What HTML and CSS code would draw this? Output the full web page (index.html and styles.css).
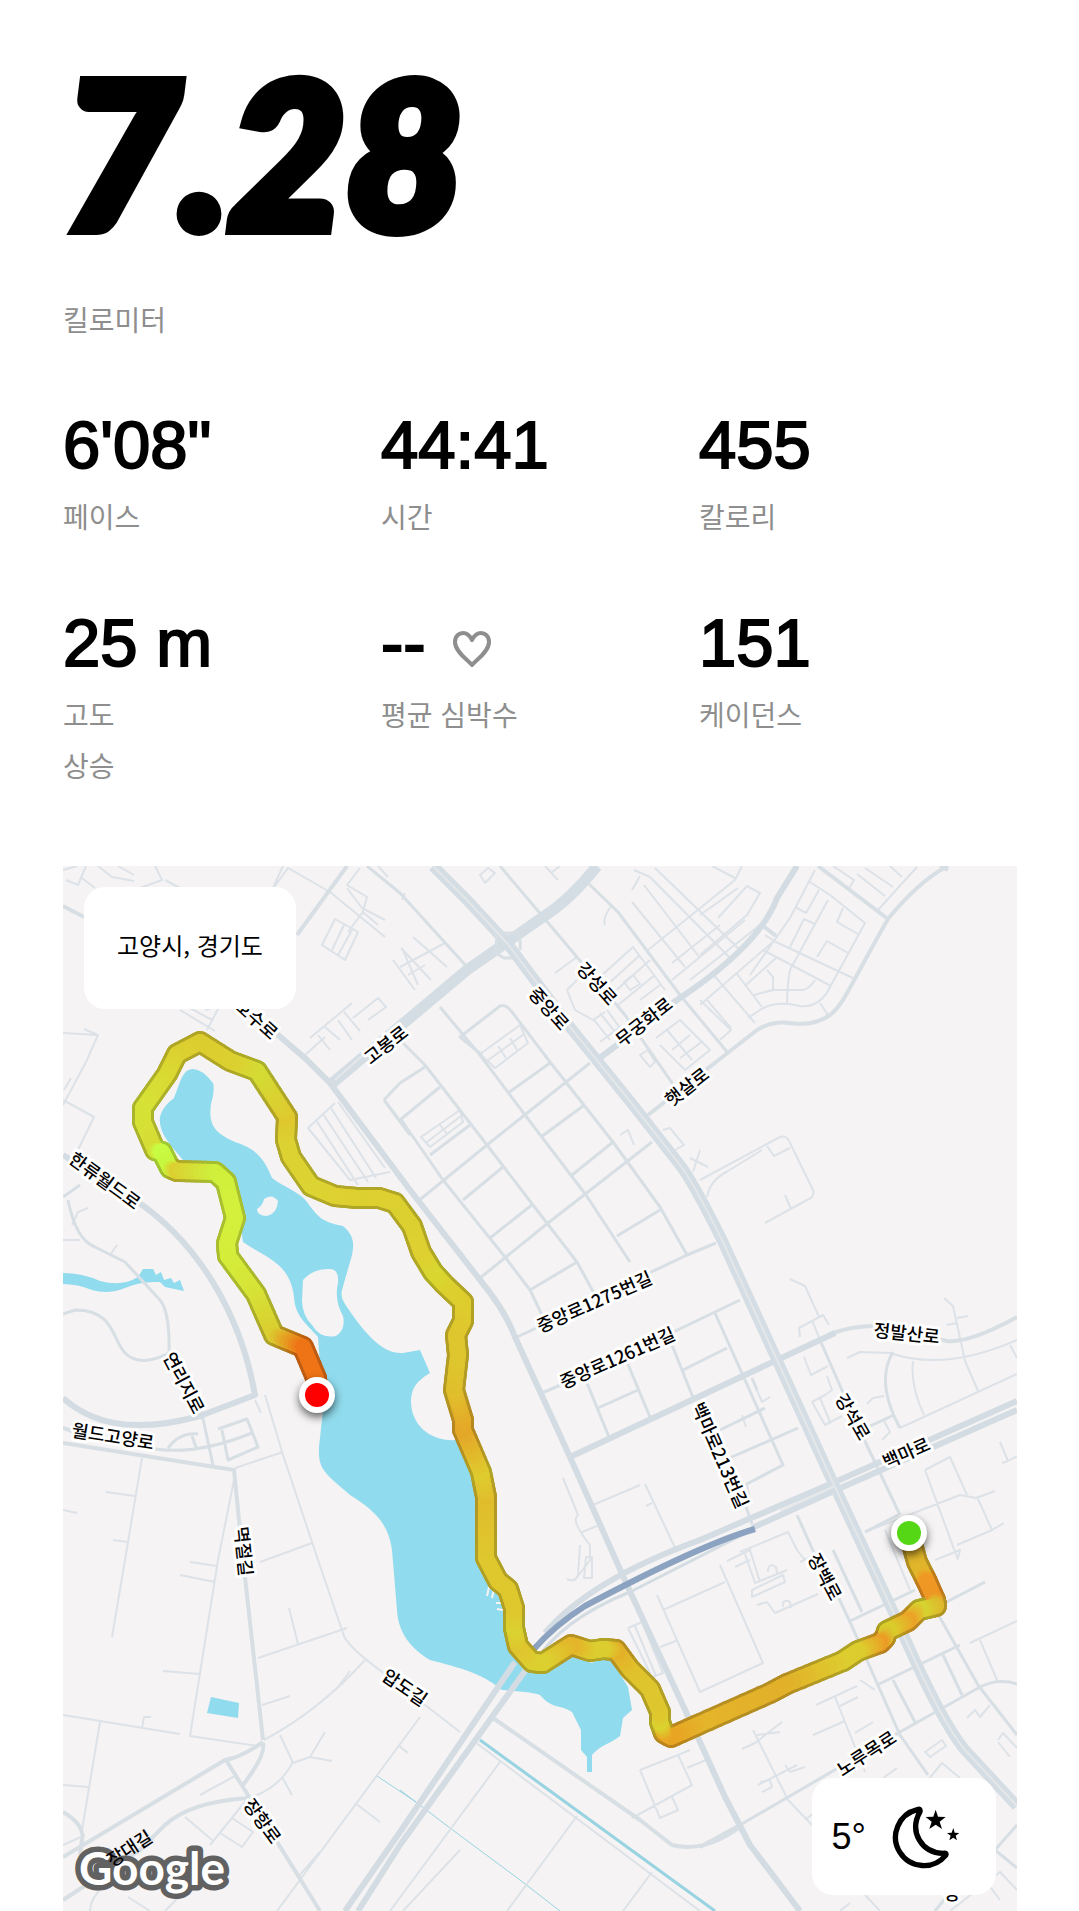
FILE: index.html
```html
<!DOCTYPE html>
<html lang="ko">
<head>
  <meta charset="UTF-8">
  <meta name="viewport" content="width=device-width, initial-scale=1.0">
  <title>러닝 기록</title>
  <link rel="stylesheet" href="styles.css">
</head>
<body>
  <main class="run">
    <header class="distance">
      <h1>7.28</h1>
      <p class="label">킬로미터</p>
    </header>

    <section class="stats">
      <div class="stat">
        <p class="value">6'08"</p>
        <p class="label">페이스</p>
      </div>
      <div class="stat">
        <p class="value">44:41</p>
        <p class="label">시간</p>
      </div>
      <div class="stat">
        <p class="value">455</p>
        <p class="label">칼로리</p>
      </div>
      <div class="stat">
        <p class="value">25 m</p>
        <p class="label">고도<br>상승</p>
      </div>
      <div class="stat">
        <p class="value">--
          <svg class="heart" viewBox="0 0 40 38" aria-hidden="true">
            <path d="M20 35 C16 30 3 22 3 12 C3 6 7 3 11 3 C16 3 18 6 20 10 C22 6 24 3 29 3 C33 3 37 6 37 12 C37 22 24 30 20 35 Z"/>
          </svg>
        </p>
        <p class="label">평균 심박수</p>
      </div>
      <div class="stat">
        <p class="value">151</p>
        <p class="label">케이던스</p>
      </div>
    </section>

    <section class="map">
      <svg class="map-canvas" viewBox="63 866 954 1045" role="img" aria-label="러닝 경로 지도">
        <!-- water -->
        <g class="water">
          <path d="M193 1069 Q202 1069 213 1083 Q215 1090 211 1104 C208 1125 215 1133 235 1142 C255 1148 264 1158 272 1178 C285 1188 300 1192 307 1202 C318 1217 322 1222 343 1226 C355 1236 355 1246 350 1262 L342 1290 Q340 1297 345 1304 C362 1330 382 1355 403 1353 L420 1350 L430 1373 C415 1382 411 1390 411 1403 C412 1425 430 1442 457 1440 L483 1500 L485 1557 L497 1583 L515 1645 L530 1662 L573 1656 L592 1663 L608 1655 L628 1687 L632 1710 L623 1718 L620 1736 C610 1744 600 1745 592 1755 L592 1772 L587 1772 L587 1757 L581 1750 L581 1730 L572 1712 C560 1704 553 1710 540 1695 Q534 1692 502 1690 C480 1672 460 1668 430 1660 C405 1645 398 1627 397 1610 L392 1550 C388 1520 370 1508 350 1495 C325 1473 318 1470 319 1447 L323 1410 L318 1337 C308 1325 295 1317 294 1297 C290 1262 265 1258 243 1242 L238 1210 L230 1180 L183 1160 C170 1145 158 1132 160 1117 Q162 1107 174 1098 C180 1084 182 1069 193 1069 Z"/>
          <path d="M63 1273 Q82 1273 100 1281 Q122 1287 138 1277 L143 1269 L153 1269 L156 1275 L161 1272 L164 1280 L171 1278 L174 1283 L180 1280 L184 1291 L165 1287 L160 1282 Q140 1281 125 1288 Q108 1295 92 1290 Q78 1284 63 1284 Z"/>
          <path d="M211 1697 L239 1703 L238 1718 L207 1713 Z"/>
        </g>
        <g class="land">
          <path d="M303 1280 Q314 1268 330 1269 Q339 1269 338 1283 Q334 1300 343 1316 Q346 1330 336 1336 Q320 1339 312 1325 Q302 1315 302 1300 Z"/>
          <path d="M257 1209 Q263 1205 264 1199 Q272 1193 278 1201 Q277 1214 267 1216 Q257 1216 257 1209 Z"/>
        </g>
        <g class="pier">
          <path d="M489 1587 L487 1596 M494 1589 L492 1598 M496 1603 L503 1603 M497 1609 L503 1610"/>
        </g>
        <path class="canal" d="M480 1740 L590 1820 L715 1911"/>
        <path class="canal thin" d="M377 1776 L416 1802 M400 1790 L450 1828 L520 1880 L560 1911"/>

        <!-- narrow streets -->
        <g class="street">
          <path d="M63 870 L77 866 M66 880 L78 885 L86 866 M82 878 L95 888 M98 866 L112 877 L134 881 M118 866 L134 875 M155 866 L162 880 L140 888 M165 880 L180 888"/>
          <path d="M283 866 L272 890 L288 868 L330 892 L385 937 M360 868 L347 885 L367 897 L362 915 M347 888 L362 908 L385 920 M362 913 L348 932 M363 912 L378 925 M335 919 L358 932 L345 960 L322 945 Z M344 925 L332 950 M352 930 L338 955 M378 866 L388 877 M402 900 L405 893"/>
          <path d="M402 948 L418 985 M400 967 L445 943 M413 937 L447 967 M401 948 L431 980 M393 960 L415 990 M408 975 L425 965"/>
          <path d="M310 1038 L352 1003 M318 1035 L330 1050 M325 1027 L340 1040 M338 1020 L352 1040 M344 1012 L360 1031 M305 1055 L325 1037 M353 1018 L378 998 L386 1007 L368 1020"/>
          <path d="M335 1103 L308 1128 L350 1180 L390 1172 M316 1120 L358 1185 M323 1114 L368 1182 M331 1108 L376 1178 M338 1102 L385 1168"/>
          <path d="M63 1033 L98 1035 L86 1062 L63 1105 M63 1100 L94 1117 L78 1150 M71 1078 L64 1090 M84 1029 L98 1035 M180 1010 L215 1031 M190 1008 L212 1020 M205 1010 L220 1005 L207 1030"/>
          <path d="M480 1054 L520 1025 L528 1043 L495 1068 Z M487 1061 L524 1034 M498 1046 L506 1058 M510 1038 L517 1050 M421 1137 L460 1110 L463 1122 L430 1147 Z M427 1142 L461 1116 M440 1125 L448 1135"/>
          <path d="M602 975 L633 947 L665 990 M607 985 L640 955 M612 994 L650 960 M640 1000 L660 985 M618 1005 L655 975 M624 982 L633 975 L640 984 L630 990 Z M567 990 L577 980 M567 990 L575 1010 L593 1020 L605 1012 M594 1020 L610 1040 M600 1013 L620 1038 M607 1010 L623 1032 M600 1042 L620 1027 M555 973 L577 957"/>
          <path d="M656 1038 L680 1020 L710 1050 L685 1070 L660 1045 M667 1030 L692 1060 M672 1050 L690 1035 M680 1058 L703 1041 M640 1055 L648 1050 L655 1062 L650 1067 Z M663 1130 L670 1128 L684 1145 L675 1150 M620 1135 L628 1130 L634 1145 M480 875 L488 868 L495 873 L485 883 Z M545 866 L558 880 M552 872 L560 866"/>
          <path d="M605 925 Q602 918 612 905 M634 870 L650 877 L732 960 M655 868 L740 950 M644 885 L700 958 M632 902 L685 967 M640 876 L632 890 M690 980 L760 925 M672 980 L745 920 M648 950 L735 880 L742 866 M672 963 L720 925 M700 915 L738 888 M712 866 L735 878"/>
          <path d="M718 918 L747 886 L760 893 L747 915 L700 955 M750 975 L790 918 L815 870 M810 882 L830 895 L865 923 L830 987 Q820 1008 800 1006 Q775 1000 760 1010 L748 1018 M795 907 L806 913 L819 890 M828 900 L790 970 Q787 985 787 1004 M790 947 L804 919 L815 924 M843 908 L837 922 L858 934 M838 920 L842 910 M817 957 L827 941 L848 953 M765 935 L776 942 L855 979 M763 950 L831 986 M773 990 L803 990 Q810 988 815 980 M737 974 L762 1007 M755 1023 L712 973 M754 995 L773 990 L773 977 L767 970 M746 985 L777 957 M700 1005 L775 940 M820 1003 L828 1015 M833 866 L854 880 L848 890 M857 874 L885 896 M865 868 L893 887 M890 866 L902 877 M877 911 L917 867"/>
          <path d="M700 1000 L731 1030 L720 1040 M707 1000 L731 1028 M700 1180 L780 1137 Q787 1135 790 1143 L813 1190 Q815 1197 807 1200 L765 1223 M707 1197 Q710 1180 728 1171 L762 1150 M767 1146 L774 1156 L790 1148 M785 1195 L791 1209 M690 1158 L708 1167 M700 1150 L693 1172"/>
          <path d="M63 1240 L80 1240 M110 1255 L117 1245 M72 1225 L78 1212 L88 1208 M142 1458 L125 1560 L112 1637 M106 1492 L135 1496 M113 1540 L128 1542 M63 1510 L77 1513 M234 1480 L218 1560 L190 1736 L258 1746 M180 1575 L215 1582 M190 1562 L217 1566 M163 1671 L200 1674"/>
          <path d="M255 1400 L261 1413 M265 1395 L283 1455 L318 1560 L343 1633 Q345 1645 385 1674 L460 1732 M235 1468 L283 1452 M260 1562 L312 1543 M258 1658 L347 1628 M289 1608 L298 1644 M262 1705 L290 1696 M63 1715 L180 1734 M142 1728 L144 1717 L151 1717 M100 1722 L82 1830 M63 1785 L88 1787"/>
          <path d="M264 1740 Q320 1710 365 1660 M338 1687 L350 1671 M280 1735 L293 1763 L310 1757 L332 1761 M310 1757 L325 1732 M248 1798 Q278 1790 293 1762 M200 1795 L235 1776 M185 1817 L212 1840 M210 1845 L248 1798 M220 1833 L242 1847 L253 1832 L232 1818 M282 1777 L292 1795 M420 1717 L277 1911 M298 1877 L320 1852 M355 1803 L380 1822 M398 1745 L408 1753 M390 1911 L500 1762 M507 1911 L577 1816 M623 1911 L652 1872 M475 1742 L700 1911 M128 1897 L150 1911 M165 1911 L210 1865 M63 1845 L85 1835 M90 1911 Q90 1898 105 1885 M403 1911 L460 1850"/>
          <path d="M563 1478 L578 1515 Q570 1520 590 1545 L590 1560 L575 1580 M582 1532 L597 1526 M580 1545 L578 1575 Q575 1583 567 1579 M586 1557 L592 1557 L592 1578 L584 1578 Z M593 1505 L640 1485 M645 1484 L677 1552 M646 1506 L652 1503"/>
          <path d="M720 1565 L763 1663 L700 1692 L657 1595 M663 1610 L725 1582 M660 1647 L676 1641 M628 1628 L642 1622 L663 1673 L652 1677 L628 1628 M635 1626 L656 1676 M640 1770 L678 1755 L692 1785 L643 1812 L632 1818 M640 1770 L660 1818 L678 1810 L672 1797 M687 1768 L706 1760 M678 1755 L690 1750"/>
          <path d="M727 1561 L750 1550 L760 1582 M745 1554 L755 1583 L787 1570 M752 1590 L783 1575 L785 1582 L752 1597 Z M757 1605 L767 1602 L775 1613 L818 1594 M768 1572 Q768 1562 776 1567 L777 1573 M783 1607 Q782 1598 790 1602 L791 1608 M800 1562 L815 1555 M735 1567 L750 1560"/>
          <path d="M816 1705 L857 1686 M835 1697 L865 1772 M840 1706 L858 1697 M813 1735 L845 1721 M855 1733 L873 1722 M742 1749 L755 1743 L782 1722 M753 1730 L788 1800 L812 1825 M757 1735 L780 1732 M758 1785 L797 1765 M760 1782 L770 1780 L772 1787 L762 1792 M785 1765 L790 1772 L805 1767 M805 1820 L815 1812 M883 1778 L897 1768"/>
          <path d="M925 1752 L942 1740 L946 1746 L930 1757 Z M928 1780 L942 1763 L960 1778 M967 1718 L975 1710 L980 1717 L990 1705 M998 1740 L1003 1733 L1017 1748 M998 1742 L1010 1757 M970 1643 L1017 1621 M980 1640 L997 1680 M875 1690 L860 1680 M885 1530 L910 1590 M935 1560 L960 1550 L958 1558 M925 1470 L950 1457 L967 1495 M925 1470 L958 1560 M865 1532 L960 1495 L976 1498 L995 1491 M978 1499 L992 1530 L957 1545 M992 1530 L1004 1523 M1000 1442 L1008 1461 L1017 1456 M1002 1463 L1008 1461"/>
          <path d="M790 1279 L805 1286 L819 1317 M800 1337 L799 1328 L823 1315 L829 1325 M812 1320 L820 1340 M804 1357 L811 1375 L828 1366 M812 1402 L825 1395 L832 1390 L827 1376 M812 1402 L825 1425 L842 1416 M820 1398 L830 1422 M847 1358 L860 1352 L890 1353 Q945 1372 1017 1340 M913 1361 Q910 1385 924 1415 M944 1298 L953 1306 L965 1361 L978 1391 M957 1318 L968 1316 M947 1325 L957 1323 M900 1428 L1017 1374 M1010 1345 L1017 1358 M867 1404 L873 1398 L884 1396 M884 1421 L890 1432 L882 1440 M756 1388 L762 1402 L770 1397 M742 1415 L746 1427"/>
          <path d="M747 1485 L750 1500 M805 1560 L797 1550 L788 1532 L740 1552 M840 1911 L850 1903 M865 1895 L880 1911 M950 1911 L1000 1872 L1017 1890 M985 1880 L1000 1900"/>
        </g>

        <!-- local roads -->
        <g class="local">
          <path d="M367 866 L400 893 L468 968 M440 1007 L480 1055 L525 1115 L586 1195 L630 1262 M400 1040 L425 1065 L487 1145 L533 1205 L577 1262 L595 1295 M400 1118 L443 1180 L505 1257 L530 1290 L542 1315 M482 1055 L460 1037 L500 1006 Q506 1004 512 1012 L550 1062 L613 1142 L660 1207 L687 1255"/>
          <path d="M500 866 L577 957 L625 1015 L677 1090 M589 884 L618 912 L680 995 L728 1053 M400 1083 L425 1067 M384 1100 L400 1083 M384 1100 L410 1135 M400 1120 L440 1087 M398 1118 L384 1100 M508 1093 L550 1063 M417 1202 L487 1145 L590 1063 M430 1155 L470 1125 M541 1137 L583 1106 M463 1200 L503 1167 M572 1175 L613 1142 M480 1278 L548 1223 L652 1142 M490 1238 L533 1204 M530 1290 L577 1262 M617 1236 L660 1210"/>
          <path d="M517 1337 L545 1324 M645 1275 L687 1255 L716 1243 M542 1393 L565 1383 M665 1336 L740 1300 M585 1378 L609 1437 M627 1362 L650 1417 M598 1408 L638 1390 M672 1345 L694 1400 M740 1490 L752 1524 M683 1370 L727 1348 M715 1313 L783 1465 L745 1485 M720 1430 L765 1408 M725 1460 L798 1428 M752 1378 L757 1390"/>
          <path d="M797 1515 L815 1555 M835 1590 L850 1622 L900 1735 L928 1775 M833 1550 L862 1612 M848 1622 L915 1590 M865 1532 L898 1515 M820 1340 L845 1397 M862 1435 L900 1515 M935 1608 L985 1582 M930 1600 L978 1685 L1017 1735 M877 1685 L960 1645 M740 1825 L900 1732 L980 1687 Q998 1678 1017 1684 M893 1680 L915 1722 M943 1655 L962 1695 M893 1352 Q875 1382 900 1428 M868 1427 L894 1415 M995 1850 L1017 1825 M995 1850 L1017 1868 M935 1911 L960 1880"/>
          <path d="M68 1200 Q76 1240 95 1247 L125 1262 L160 1300 Q170 1312 169 1353 Q140 1368 125 1353 C112 1340 115 1310 75 1310 L63 1314 M63 1197 L80 1185 M200 1405 L213 1465 M168 1448 Q180 1432 198 1434 M192 1436 L197 1450 M145 1447 Q190 1458 252 1433 M218 1429 L247 1419 L258 1447 L228 1460 L222 1430"/>
        </g>

        <!-- main roads -->
        <g class="road">
          <path d="M63 1443 L234 1470 L242 1550 L263 1740 M263 1742 Q240 1758 225 1760 L63 1857 M226 1760 L248 1795 L320 1911 M263 1743 Q266 1755 243 1785 M248 1798 Q190 1802 165 1825 L140 1850 L63 1900 M63 1812 Q85 1825 82 1840 L80 1855 M63 1428 L90 1437 M347 866 L297 935 M63 906 L84 917"/>
          <path d="M648 1115 L757 1030 C785 1012 800 1035 830 1015 C845 1003 850 985 888 919 Q920 880 948 866 M818 866 L888 919 M762 925 L776 936 M940 866 L948 870"/>
          <path d="M493 1718 L640 1820 L672 1845 Q705 1853 740 1827 M700 1847 L740 1825"/>
          <path d="M833 1333 Q855 1325 880 1326 L947 1341 Q970 1343 1017 1317"/>
        </g>
        <g class="avenue">
          <path d="M63 1155 L135 1200 C195 1240 240 1310 255 1395 L200 1416 C130 1435 90 1422 63 1398"/>
          <path d="M255 1015 L307 1060 L330 1083 L410 1190 L480 1280 Q505 1310 515 1337 L570 1457 L627 1585 L700 1742 L725 1797 L750 1845 L800 1911"/>
          <path d="M570 1457 L777 1360 L835 1333"/>
          <path d="M597 1060 L677 1000 Q760 945 777 898 L797 866"/>
          <path d="M1017 1401 L835 1482 L700 1540 Q590 1580 545 1633"/>
          <path d="M1017 1410 L836 1490 L752 1528"/>
          <path d="M515 1662 L400 1832 L345 1911"/>
          <path d="M530 1664 L400 1845 L358 1911"/>
        </g>
        <path class="avenue faint" d="M752 1530 L630 1592 Q560 1620 533 1665"/>
        <g class="highway">
          <path d="M597 866 Q570 900 543 917 L467 970 L330 1085"/>
          <path d="M433 866 L467 900 L507 943 L570 1027 L633 1105 L680 1165 Q692 1180 722 1240 L777 1360 L835 1487 L897 1620 Q940 1720 965 1750 L1017 1806"/>
        </g>
        <path class="ramp" d="M496 933 L518 933 Q521 938 520 950 M496 933 Q498 945 494 952 L504 958 L514 958"/>
        <path class="median" d="M433 866 L467 900 L507 943 L570 1027 L633 1105 L680 1165 Q692 1180 722 1240 L777 1360 L835 1487 L897 1620 Q940 1720 965 1750 L1017 1806 M400 1022 L335 1080 M835 1486 L780 1511"/>
        <path class="tunnel" d="M755 1529 Q700 1545 585 1606 Q555 1625 533 1650"/>

        <text class="google" x="79" y="1885">Google</text>

        <!-- street names -->
        <g class="names">
          <text transform="translate(252 1024) rotate(42)">호수로</text>
          <text transform="translate(390 1050) rotate(-38)">고봉로</text>
          <text transform="translate(544 1013) rotate(48)">중앙로</text>
          <text transform="translate(592 988) rotate(48)">강성로</text>
          <text transform="translate(648 1027) rotate(-38)">무궁화로</text>
          <text transform="translate(691 1092) rotate(-38)">햇살로</text>
          <text transform="translate(101 1186) rotate(36)">한류월드로</text>
          <text transform="translate(597 1308) rotate(-24)">중앙로1275번길</text>
          <text transform="translate(620 1364) rotate(-24)">중앙로1261번길</text>
          <text transform="translate(906 1340) rotate(6)">정발산로</text>
          <text transform="translate(714 1458) rotate(66)">백마로213번길</text>
          <text transform="translate(847 1420) rotate(60)">강석로</text>
          <text transform="translate(909 1459) rotate(-24)">백마로</text>
          <text transform="translate(178 1386) rotate(62)">연리지로</text>
          <text transform="translate(112 1443) rotate(9)">월드고양로</text>
          <text transform="translate(237 1552) rotate(84)">멱절길</text>
          <text transform="translate(401 1693) rotate(34)">압도길</text>
          <text transform="translate(819 1580) rotate(62)">장백로</text>
          <text transform="translate(257 1825) rotate(54)">장항로</text>
          <text class="plain" transform="translate(133 1854) rotate(-33)">장대길</text>
          <text transform="translate(870 1759) rotate(-33)">노루목로</text>
          <text transform="translate(952 1900)">장</text>
        </g>

        <g id="route"></g>

        <!-- start and finish -->
        <g class="marker">
          <circle cx="909" cy="1533" r="18"/>
          <circle class="start" cx="909" cy="1533" r="12"/>
        </g>
        <g class="marker">
          <circle cx="317" cy="1395" r="18"/>
          <circle class="finish" cx="317" cy="1395" r="12"/>
        </g>
      </svg>

      <div class="place">고양시, 경기도</div>
      <div class="weather">
        <span>5°</span>
        <svg class="moon" viewBox="570 760 219 201" aria-hidden="true">
          <path class="crescent" d="M652 780 A85 85 0 1 0 737 917 Q741 908 729 911 C665 909 626 847 660 786 Q662 776 652 780 Z"/>
          <path d="M707 780 L714 801 L737 802 L719 816 L726 838 L707 825 L688 838 L695 816 L677 802 L700 801 Z"/>
          <path d="M760 835 L764 849 L778 850 L767 858 L771 872 L760 864 L748 872 L752 858 L741 850 L755 849 Z"/>
        </svg>
      </div>
    </section>
  </main>
  <script src="route.js"></script>
</body>
</html>
```
FILE: styles.css
```css
* {
  box-sizing: border-box;
}
body {
  margin: 0;
  background-color: #fff;
  color: #000;
  font-family: "Liberation Sans", "Noto Sans CJK KR", sans-serif;
}
h1, p {
  margin: 0;
}
.run {
  padding: 43px 62px 0 63px;
}
.distance {
  margin-bottom: 60px;
}
.distance h1 {
  margin-bottom: 35px;
  font-family: Lato, sans-serif;
  font-size: 202px;
  font-weight: 900;
  font-style: italic;
  line-height: 216px;
  -webkit-text-stroke: 12px #000;
}
.label {
  color: #8e8e8e;
  font-family: "Noto Sans CJK KR", sans-serif;
  font-size: 28px;
  line-height: 51px;
}
.stats {
  display: grid;
  grid-template-columns: repeat(3, 1fr);
  row-gap: 61px;
  margin-bottom: 75px;
}
.value {
  display: flex;
  align-items: center;
  gap: 26px;
  margin-bottom: 6px;
  font-size: 67px;
  line-height: 80px;
  -webkit-text-stroke: 2px #000;
}
.heart {
  width: 40px;
  height: 38px;
  margin-top: 12px;
  fill: none;
  stroke: #8e8e8e;
  stroke-width: 4;
  stroke-linejoin: round;
}

/* map */
.map {
  position: relative;
  background-color: #f5f3f4;
}
.map-canvas {
  display: block;
  width: 100%;
  height: auto;
}
.water {
  fill: #90dbed;
}
.land {
  fill: #f5f3f4;
}
.pier {
  fill: none;
  stroke: #f5f3f4;
  stroke-width: 2;
}
.canal {
  fill: none;
  stroke: #97d3e1;
  stroke-width: 3;
}
.canal.thin {
  stroke-width: 1;
}
.street, .local, .road, .avenue, .highway, .ramp {
  fill: none;
  stroke: #d7dfe4;
  stroke-linejoin: round;
}
.street {
  stroke-width: 2;
  stroke: #dce2e7;
}
.local {
  stroke-width: 3;
}
.road {
  stroke-width: 4;
}
.avenue {
  stroke-width: 6;
  stroke: #d3dce2;
}
.avenue.faint, .ramp {
  stroke-width: 3;
}
.highway {
  stroke-width: 11;
  stroke: #d3dde3;
}
.median {
  fill: none;
  stroke: #e4e7ea;
  stroke-width: 2;
}
.tunnel {
  fill: none;
  stroke: #8ba3c0;
  stroke-width: 6;
}
.names text {
  font-family: "Noto Sans CJK KR", sans-serif;
  font-size: 18px;
  font-weight: 500;
  text-anchor: middle;
  paint-order: stroke;
  stroke: #fff;
  stroke-width: 6px;
  stroke-linejoin: round;
}
.names .plain {
  stroke: none;
}
#route line {
  stroke-linecap: round;
}
.route-edge {
  stroke-width: 22;
}
.route-line {
  stroke-width: 16;
}
.marker {
  fill: #fff;
  filter: drop-shadow(0 4px 4px rgba(0, 0, 0, 0.6));
}
.start {
  fill: #56d715;
}
.finish {
  fill: #f00;
}
.google {
  font-family: Lato, sans-serif;
  font-size: 46px;
  font-weight: 700;
  fill: #fff;
  paint-order: stroke;
  stroke: #616161;
  stroke-width: 11px;
  stroke-linejoin: round;
}
.place, .weather {
  position: absolute;
  display: flex;
  align-items: center;
  border-radius: 21px;
  background-color: #fff;
}
.place {
  top: 21px;
  left: 21px;
  height: 122px;
  padding: 0 33px 8px;
  font-family: "Noto Sans CJK KR", sans-serif;
  font-size: 24px;
}
.weather {
  right: 21px;
  bottom: 16px;
  height: 117px;
  gap: 24px;
  padding: 0 33px 0 20px;
  font-size: 36px;
}
.moon {
  width: 73px;
  height: 67px;
}
.crescent {
  fill: none;
  stroke: #000;
  stroke-width: 16;
  stroke-linejoin: round;
}
```
FILE: route.js
```js
// x, y, pace colour
const points = [
  [909, 1533, [224, 176, 44]], [917, 1562, [224, 182, 44]], [924, 1576, [226, 180, 42]], [927, 1582, [240, 152, 36]],
  [935, 1600, [238, 150, 36]], [936, 1606, [222, 184, 44]], [919, 1610, [214, 212, 48]],
  [908, 1621, [236, 162, 40]], [887, 1631, [216, 208, 44]], [885, 1638, [220, 190, 44]],
  [880, 1643, [236, 156, 38]], [858, 1651, [220, 205, 46]], [843, 1661, [221, 205, 46]],
  [787, 1684, [226, 178, 42]], [770, 1693, [226, 176, 42]], [700, 1724, [228, 180, 42]],
  [671, 1737, [232, 164, 36]], [664, 1733, [232, 166, 36]], [660, 1722, [218, 212, 48]],
  [660, 1712, [222, 200, 46]], [650, 1689, [222, 198, 46]], [630, 1669, [224, 194, 44]],
  [616, 1650, [228, 176, 40]], [603, 1649, [220, 205, 48]], [590, 1651, [220, 205, 48]],
  [571, 1645, [228, 180, 42]], [543, 1663, [220, 208, 48]], [532, 1662, [220, 208, 48]],
  [518, 1646, [224, 196, 46]], [514, 1628, [218, 210, 48]], [514, 1608, [222, 200, 46]],
  [508, 1589, [222, 200, 46]], [498, 1581, [222, 200, 46]], [486, 1558, [222, 200, 46]],
  [486, 1497, [224, 188, 44]], [481, 1472, [222, 204, 46]], [463, 1430, [228, 166, 40]],
  [463, 1420, [228, 170, 40]], [454, 1390, [224, 190, 44]], [458, 1355, [222, 198, 46]],
  [456, 1335, [222, 198, 46]], [463, 1321, [222, 200, 46]], [463, 1302, [222, 204, 46]],
  [444, 1284, [220, 208, 46]], [433, 1272, [216, 216, 48]], [421, 1252, [222, 208, 48]],
  [412, 1226, [220, 208, 48]], [395, 1203, [220, 208, 48]], [379, 1198, [222, 208, 48]],
  [357, 1198, [220, 208, 48]], [335, 1196, [222, 208, 48]], [311, 1186, [220, 212, 50]],
  [291, 1157, [220, 210, 50]], [286, 1140, [220, 210, 50]], [287, 1117, [222, 200, 46]],
  [257, 1071, [212, 220, 52]], [230, 1061, [220, 208, 48]], [200, 1042, [220, 204, 46]],
  [177, 1054, [220, 208, 48]], [167, 1074, [218, 216, 50]], [143, 1108, [214, 226, 54]],
  [143, 1122, [214, 226, 54]], [155, 1150, [214, 220, 52]], [162, 1152, [200, 252, 66]],
  [170, 1168, [200, 246, 62]], [177, 1171, [220, 208, 48]], [215, 1172, [206, 238, 60]],
  [226, 1182, [208, 240, 60]], [235, 1218, [212, 240, 60]], [227, 1243, [212, 238, 60]],
  [228, 1256, [212, 238, 58]], [256, 1294, [214, 226, 54]], [274, 1335, [218, 206, 48]],
  [303, 1347, [238, 116, 22]], [316, 1378, [238, 116, 22]], [317, 1390, [238, 116, 22]]
];

const route = document.getElementById('route');
const steps = 8;

function rgb(color, shade) {
  return `rgb(${color.map(c => Math.round(c * shade)).join(',')})`;
}

function drawLine(x1, y1, x2, y2, className, color) {
  const line = document.createElementNS('http://www.w3.org/2000/svg', 'line');
  line.setAttribute('x1', x1);
  line.setAttribute('y1', y1);
  line.setAttribute('x2', x2);
  line.setAttribute('y2', y2);
  line.setAttribute('class', className);
  line.setAttribute('stroke', color);
  route.appendChild(line);
}

function drawRoute(className, shade) {
  for (let i = 1; i < points.length; i++) {
    const [x1, y1, from] = points[i - 1];
    const [x2, y2, to] = points[i];
    for (let s = 0; s < steps; s++) {
      const a = s / steps;
      const b = (s + 1) / steps;
      const color = from.map((c, k) => c + (to[k] - c) * a);
      drawLine(x1 + (x2 - x1) * a, y1 + (y2 - y1) * a, x1 + (x2 - x1) * b, y1 + (y2 - y1) * b, className, rgb(color, shade));
    }
  }
}

drawRoute('route-edge', 0.8);
drawRoute('route-line', 1);
```
